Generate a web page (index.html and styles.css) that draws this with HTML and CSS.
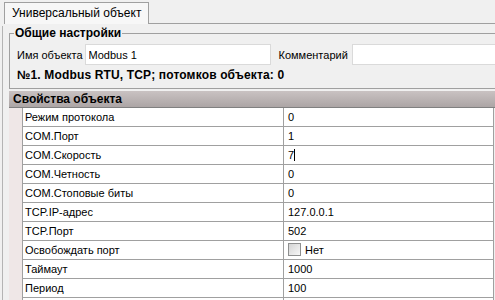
FILE: index.html
```html
<!DOCTYPE html>
<html lang="ru">
<head>
    <meta charset="UTF-8">
    <meta name="viewport" content="width=device-width, initial-scale=1.0">
    <title>Универсальный объект</title>
    <link rel="stylesheet" href="styles.css">
</head>
<body>
    <div class="tabstrip">
        <div class="tab">Универсальный объект</div>
        <div class="tab-rest"></div>
    </div>
    <div class="panel">
        <fieldset class="group">
            <legend>Общие настройки</legend>
            <div class="name-row">
                <label for="objname">Имя объекта</label>
                <input type="text" id="objname" class="name-input" value="Modbus 1">
                <label for="comment" class="comment-label">Комментарий</label>
                <input type="text" id="comment" class="comment-input" value="">
            </div>
            <div class="summary">№1. Modbus RTU, TCP; потомков объекта: 0</div>
        </fieldset>

        <div class="props-title">Свойства объекта</div>
        <div class="props">
            <div class="prop"><span class="stripe"></span><span class="pname">Режим протокола</span><span class="pval">0</span></div>
            <div class="prop"><span class="stripe"></span><span class="pname">COM.Порт</span><span class="pval">1</span></div>
            <div class="prop"><span class="stripe"></span><span class="pname">COM.Скорость</span><span class="pval">7<span class="caret"></span></span></div>
            <div class="prop"><span class="stripe"></span><span class="pname">COM.Четность</span><span class="pval">0</span></div>
            <div class="prop"><span class="stripe"></span><span class="pname">COM.Стоповые биты</span><span class="pval">0</span></div>
            <div class="prop"><span class="stripe"></span><span class="pname">TCP.IP-адрес</span><span class="pval">127.0.0.1</span></div>
            <div class="prop"><span class="stripe"></span><span class="pname">TCP.Порт</span><span class="pval">502</span></div>
            <div class="prop"><span class="stripe"></span><span class="pname">Освобождать порт</span><span class="pval"><span class="check"></span>Нет</span></div>
            <div class="prop"><span class="stripe"></span><span class="pname">Таймаут</span><span class="pval">1000</span></div>
            <div class="prop"><span class="stripe"></span><span class="pname">Период</span><span class="pval">100</span></div>
            <div class="prop"><span class="stripe"></span><span class="pname"></span><span class="pval"></span></div>
        </div>
    </div>
</body>
</html>
```

FILE: styles.css
```css
html, body {
    margin: 0;
    overflow: hidden;
    height: 300px;
}
body {
    background: #f0f0f0;
    font-family: 'Liberation Sans', Arial, sans-serif;
    font-size: 11px;
    color: #000;
}
.tabstrip {
    display: flex;
    height: 24px;
    padding-left: 4px;
}
.tab {
    margin-top: 2px;
    height: 21px;
    line-height: 20px;
    padding: 0 7px 0 7px;
    border: 1px solid #a0a0a0;
    border-bottom: none;
    background: #f7f7f7;
    font-size: 12px;
}
.tab-rest {
    flex: 1;
    border-bottom: 1px solid #a0a0a0;
}
.panel {
    margin-left: 2px;
    border-left: 1px solid #b4b4b4;
    height: 276px;
}
.group {
    margin: 2px -20px 0 6px;
    padding: 0 0 3px 7px;
    border: 1px solid #a0a0a0;
    min-width: 0;
}
.group legend {
    margin-left: -3px;
    padding: 0 1px;
    font-weight: bold;
    font-size: 12px;
    line-height: 14px;
}
.name-row {
    display: flex;
    align-items: center;
    height: 21px;
    margin-top: 4px;
}
.name-row label {
    margin-right: 2px;
}
.name-row input {
    height: 21px;
    box-sizing: border-box;
    border: 1px solid #dadada;
    background: #fff;
    padding: 0 3px;
    font-family: 'Liberation Sans', Arial, sans-serif;
    font-size: 11px;
    outline: none;
}
.name-input {
    width: 186px;
}
.comment-label {
    margin-left: 8px;
}
.comment-input {
    flex: 1;
    margin-left: 2px;
}
.summary {
    font-weight: bold;
    font-size: 12px;
    letter-spacing: 0.15px;
    height: 20px;
    line-height: 20px;
}
.props-title {
    margin: 2px 0 0 6px;
    height: 16px;
    line-height: 16px;
    padding-left: 4px;
    background: linear-gradient(#c9c2c2, #aca5a5);
    border-bottom: 1px solid #808080;
    font-weight: bold;
    font-size: 12px;
}
.props {
    margin-left: 6px;
}
.prop {
    display: grid;
    grid-template-columns: 14px 261px 210px;
    height: 19px;
}
.prop > span {
    box-sizing: border-box;
    border-right: 1px solid #a0a0a0;
    line-height: 18px;
    white-space: nowrap;
}
.stripe {
    background: #efe7e7;
}
.pname {
    padding-left: 2px;
    background: #fff;
    border-bottom: 1px solid #a0a0a0;
}
.pval {
    padding-left: 4px;
    background: #fff;
    border-bottom: 1px solid #a0a0a0;
}
.caret {
    display: inline-block;
    width: 1px;
    height: 12px;
    background: #000;
    vertical-align: -2px;
}
.check {
    display: inline-block;
    width: 11px;
    height: 11px;
    border: 1px solid #8e8f8f;
    background: linear-gradient(135deg, #d4d4d4, #f7f7f7);
    vertical-align: -2px;
    margin-right: 4px;
}
```
